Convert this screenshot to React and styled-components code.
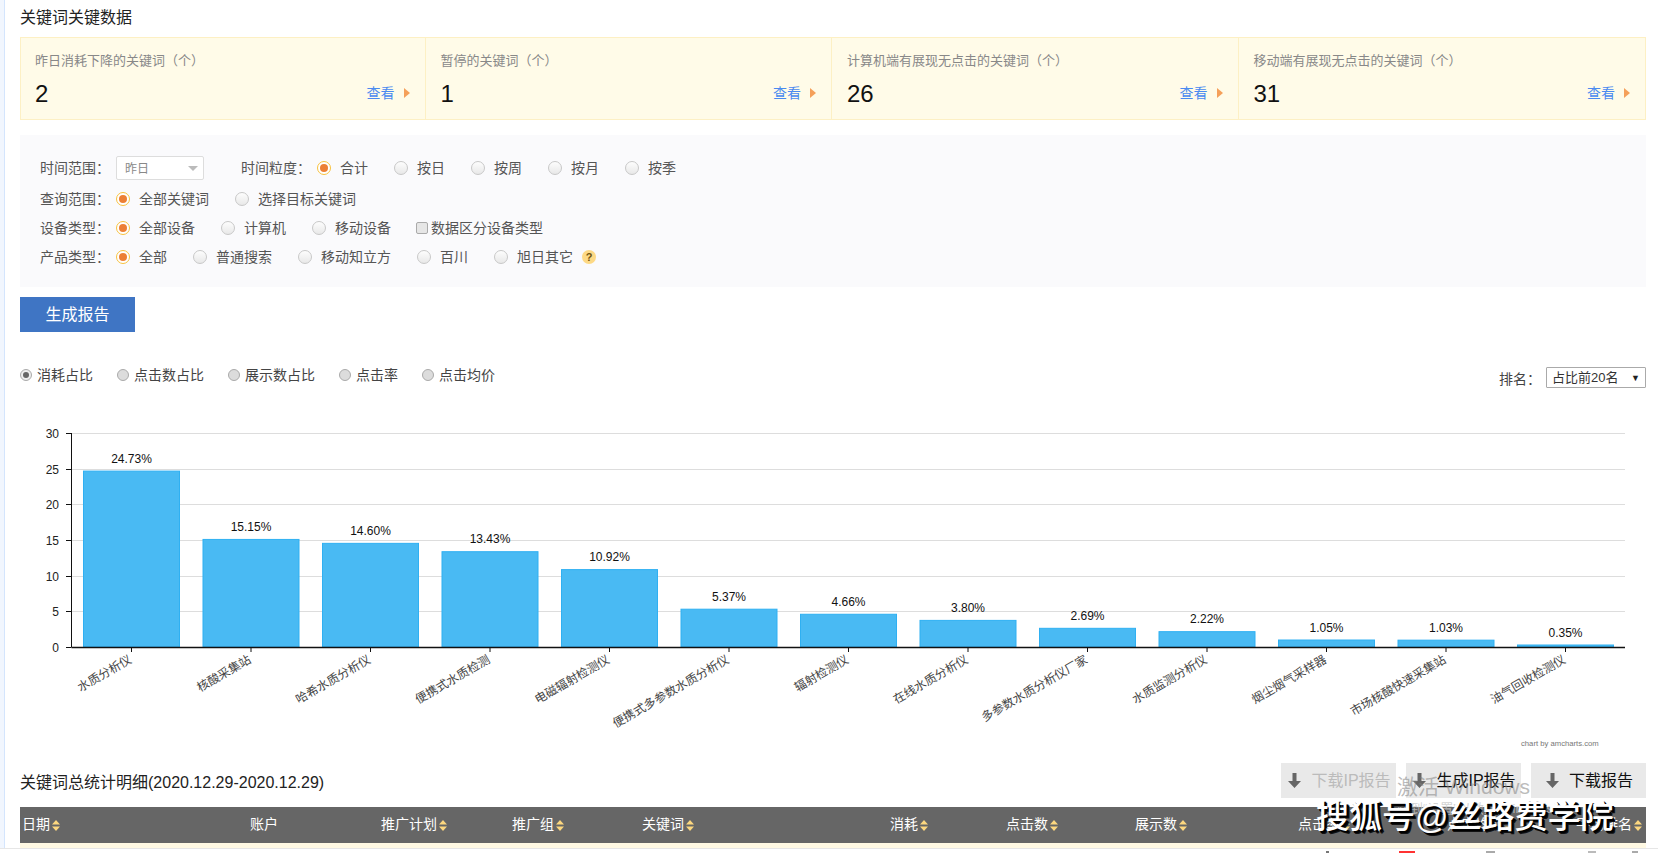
import React from "react";
import styled, { createGlobalStyle } from "styled-components";

const FONT = `"Liberation Sans", "Noto Sans CJK SC", sans-serif`;

const cards = [
  { label: "昨日消耗下降的关键词（个）", value: 2, width: 404 },
  { label: "暂停的关键词（个）", value: 1, width: 407 },
  { label: "计算机端有展现无点击的关键词（个）", value: 26, width: 407 },
  { label: "移动端有展现无点击的关键词（个）", value: 31, width: 408 }
];

const bars = [
  ["水质分析仪", 24.73],
  ["核酸采集站", 15.15],
  ["哈希水质分析仪", 14.6],
  ["便携式水质检测", 13.43],
  ["电磁辐射检测仪", 10.92],
  ["便携式多参数水质分析仪", 5.37],
  ["辐射检测仪", 4.66],
  ["在线水质分析仪", 3.8],
  ["多参数水质分析仪厂家", 2.69],
  ["水质监测分析仪", 2.22],
  ["烟尘烟气采样器", 1.05],
  ["市场核酸快速采集站", 1.03],
  ["油气回收检测仪", 0.35]
];

const columns = [
  { name: "日期", width: 230, sort: true, pad: 2 },
  { name: "账户", width: 131 },
  { name: "推广计划", width: 131, sort: true },
  { name: "推广组", width: 130, sort: true },
  { name: "关键词", width: 248, sort: true },
  { name: "消耗", width: 116, sort: true },
  { name: "点击数", width: 129, sort: true },
  { name: "展示数", width: 163, sort: true },
  { name: "点击率", width: 149, sort: true },
  { name: "点击均价", width: 129, sort: true },
  { name: "平均排名", width: 70, sort: true }
];

const GlobalStyle = createGlobalStyle`
  html, body {
    margin: 0;
    padding: 0;
    background: #fff;
    font-family: ${FONT};
  }
`;

const Page = styled.div`
  display: flex;
  width: 1658px;
  height: 853px;
  overflow: hidden;
  position: relative;
`;

const SideStrip = styled.div`
  width: 4px;
  height: 848px;
  flex: none;
  background: #f1f6fe;
  border-right: 1px solid #d4e5fd;
`;

const Content = styled.div`
  width: 1626px;
  margin-left: 15px;
  flex: none;
`;

const Heading = styled.div`
  height: 37px;
  line-height: 36px;
  font-size: 16px;
  color: #222;
`;

const CardRow = styled.div`
  display: flex;
  height: 83px;
  box-sizing: border-box;
  background: #fffbe8;
  border: 1px solid #fdf0c4;
`;

const Card = styled.div`
  box-sizing: border-box;
  width: ${p => p.$width}px;
  padding: 14px 15px 0;
  border-left: 1px solid #fdf0c4;
  &:first-child {
    border-left: 0;
    padding-left: 14px;
  }
`;

const CardLabel = styled.div`
  font-size: 13px;
  line-height: 17px;
  color: #888;
  white-space: nowrap;
`;

const CardBottom = styled.div`
  display: flex;
  align-items: center;
  justify-content: space-between;
  margin-top: 10px;
  height: 28px;
`;

const CardValue = styled.span`
  padding-top: 2px;
  font-size: 24px;
  color: #111;
`;

const ViewLink = styled.a`
  display: flex;
  align-items: center;
  gap: 9px;
  font-size: 14px;
  color: #4a8af0;
`;

// 中文字形在行框里偏下，这里统一往上提一点
const Raised = styled.span`
  padding-bottom: ${p => p.$by || 4}px;
`;

const Arrow = styled.i`
  width: 0;
  height: 0;
  border-left: 6px solid #f5a05a;
  border-top: 5px solid transparent;
  border-bottom: 5px solid transparent;
`;

const FilterPanel = styled.div`
  box-sizing: border-box;
  height: 152px;
  margin-top: 15px;
  padding: 21px 20px 0;
  background: #fafafc;
`;

const FilterRow = styled.div`
  display: flex;
  align-items: center;
  height: ${p => (p.$first ? 24 : 29)}px;
  margin-bottom: ${p => (p.$first ? 4 : 0)}px;
  font-size: 14px;
  color: #555;
  white-space: nowrap;
`;

const FieldLabel = styled.span`
  width: 76px;
  flex: none;
  padding-bottom: 2px;
`;

const FakeSelect = styled.div`
  box-sizing: border-box;
  display: flex;
  align-items: center;
  justify-content: space-between;
  width: 88px;
  height: 24px;
  margin-right: 37px;
  padding: 0 5px 0 8px;
  background: #fff;
  border: 1px solid #ddd;
  border-radius: 2px;
  font-size: 12px;
  color: #888;
`;

const SelectCaret = styled.i`
  width: 0;
  height: 0;
  border-top: 5px solid #bbb;
  border-left: 5px solid transparent;
  border-right: 5px solid transparent;
`;

const RadioOption = styled.label`
  display: flex;
  align-items: center;
  gap: 9px;
  margin-right: 26px;
`;

const Radio = styled.i`
  box-sizing: border-box;
  display: flex;
  align-items: center;
  justify-content: center;
  width: 14px;
  height: 14px;
  border-radius: 50%;
  background: ${p => (p.$on ? "#fff" : "linear-gradient(#fdfdfd, #e8e8e8)")};
  border: 1px solid ${p => (p.$on ? "#f8c23e" : "#c8c8c8")};
  &::after {
    content: "";
    display: ${p => (p.$on ? "block" : "none")};
    width: 8px;
    height: 8px;
    border-radius: 50%;
    background: #ec7f35;
  }
`;

const CheckOption = styled.label`
  display: flex;
  align-items: center;
  gap: 3px;
  margin-left: -1px;
`;

const Checkbox = styled.i`
  box-sizing: border-box;
  width: 12px;
  height: 12px;
  border-radius: 2px;
  background: #e6e6e6;
  border: 1px solid #aaa;
`;

const HelpBadge = styled.span`
  display: flex;
  align-items: center;
  justify-content: center;
  width: 14px;
  height: 14px;
  margin-left: -17px;
  border-radius: 50%;
  background: #fdd985;
  color: #6f5410;
  font-size: 11px;
  font-weight: 700;
`;

const PrimaryButton = styled.button`
  display: block;
  width: 115px;
  height: 35px;
  margin-top: 10px;
  padding: 0 0 3px;
  border: 0;
  background: #3f75c4;
  color: #fff;
  font-family: inherit;
  font-size: 16px;
`;

const ChartBar = styled.div`
  display: flex;
  align-items: center;
  justify-content: space-between;
  height: 21px;
  margin-top: 35px;
  font-size: 14px;
  color: #444;
  white-space: nowrap;
`;

const MetricGroup = styled.div`
  display: flex;
  gap: 24px;
  padding-bottom: 5px;
`;

const Metric = styled.label`
  display: flex;
  align-items: center;
  gap: 5px;
`;

const MetricRadio = styled.i`
  box-sizing: border-box;
  display: flex;
  align-items: center;
  justify-content: center;
  width: 12px;
  height: 12px;
  border-radius: 50%;
  background: ${p => (p.$on ? "#eee" : "#dcdcdc")};
  border: 1px solid #aaa;
  &::after {
    content: "";
    display: ${p => (p.$on ? "block" : "none")};
    width: 6px;
    height: 6px;
    border-radius: 50%;
    background: #666;
  }
`;

const RankPicker = styled.div`
  display: flex;
  align-items: center;
  gap: 5px;
`;

const RankSelect = styled.div`
  box-sizing: border-box;
  display: flex;
  align-items: center;
  justify-content: space-between;
  width: 100px;
  height: 21px;
  padding: 0 5px;
  border: 1px solid #aaa;
  border-radius: 1px;
  font-size: 13px;
  color: #333;
`;

const RankCaret = styled.span`
  font-size: 9px;
  color: #222;
`;

const ChartSvg = styled.svg`
  display: block;
  width: 1626px;
  height: 375px;
  font-family: ${FONT};
`;

const DetailBar = styled.div`
  display: flex;
  align-items: center;
  justify-content: space-between;
  height: 35px;
`;

const DetailTitle = styled.div`
  padding-top: 1px;
  font-size: 16px;
  color: #222;
`;

const DetailActions = styled.div`
  display: flex;
  gap: 10px;
`;

const GreyButton = styled.div`
  box-sizing: border-box;
  display: flex;
  align-items: center;
  justify-content: center;
  gap: 10px;
  width: 115px;
  height: 35px;
  padding-left: 2px;
  background: #e9e9e9;
  font-size: 16px;
  color: ${p => (p.$disabled ? "#bbb" : "#111")};
  white-space: nowrap;
`;

const TableHead = styled.div`
  display: flex;
  height: 36px;
  margin-top: 9px;
  background: #666;
  color: #fff;
  font-size: 14px;
`;

const HeadCell = styled.div`
  box-sizing: border-box;
  display: flex;
  align-items: center;
  gap: 2px;
  flex: none;
  width: ${p => p.$width}px;
  padding-left: ${p => p.$pad || 0}px;
  white-space: nowrap;
`;

const SortIcon = styled.svg`
  width: 8px;
  height: 11px;
  flex: none;
`;

const CreamRow = styled.div`
  height: 5px;
  background: #fff9e3;
`;

const BottomLine = styled.div`
  position: absolute;
  left: 0;
  right: 0;
  top: 848px;
  height: 5px;
  border-top: 1px solid #e6e6e6;
`;

const ClippedIcon = styled.i`
  position: absolute;
  left: ${p => p.$x}px;
  top: 2px;
  width: ${p => p.$w}px;
  height: 2px;
  background: ${p => p.$color};
`;

const ActivateMark = styled.div`
  position: absolute;
  left: 1397px;
  top: 773px;
  font-size: 21px;
  line-height: 28px;
  color: rgba(130, 130, 130, 0.55);
  white-space: nowrap;
  pointer-events: none;
`;

const ActivateHint = styled.div`
  font-size: 13px;
  line-height: 16px;
  color: rgba(200, 200, 200, 0.8);
`;

const Watermark = styled.div`
  position: absolute;
  left: 1316px;
  top: 796px;
  font-size: 33px;
  line-height: 42px;
  font-weight: 500;
  color: #fff;
  text-shadow: 2px 2px 0 #000, 3px 3px 0 #111;
  white-space: nowrap;
`;

const FilterOptions = ({ items, selected = 0 }) =>
  items.map((item, i) => (
    <RadioOption key={item}>
      <Radio $on={i === selected} />
      <Raised $by={2}>{item}</Raised>
    </RadioOption>
  ));

const Sort = () => (
  <SortIcon viewBox="0 0 8 11">
    <path d="M4 0l4 4.5H0zM4 11L0 6.5h8z" fill="#fcd77f" />
  </SortIcon>
);

const DownloadIcon = () => (
  <svg width="13" height="15" viewBox="0 0 13 15">
    <path d="M4.5 0h4v8H13l-6.5 7L0 8h4.5z" fill="#666" />
  </svg>
);

// 图表直接用页面坐标画，viewBox 偏移到图表所在位置
const X0 = 71.5;
const X1 = 1625;
const Y0 = 647;
const UNIT = 214 / 30;
const STEP = (X1 - X0) / bars.length;

function Chart() {
  return (
    <ChartSvg viewBox="20 388 1626 375">
      {[0, 5, 10, 15, 20, 25, 30].map(v => {
        const y = Math.round(Y0 - v * UNIT);
        return (
          <g key={v}>
            {v > 0 && <line x1={X0} x2={X1} y1={y + 0.5} y2={y + 0.5} stroke="#ddd" />}
            <line x1="66" x2={X0} y1={y + 0.5} y2={y + 0.5} stroke="#111" />
            <text x="59" y={y + 4.5} textAnchor="end" fontSize="12" fill="#222">
              {v}
            </text>
          </g>
        );
      })}
      {bars.map(([name, value], i) => {
        const left = X0 + STEP * i + 12;
        const center = left + 48;
        const top = Y0 - value * UNIT;
        return (
          <g key={name}>
            <rect
              x={left}
              y={top + 0.5}
              width="96"
              height={Y0 - top - 0.5}
              fill="#49baf3"
              stroke="#2fb0f2"
            />
            <text x={center} y={top - 8} textAnchor="middle" fontSize="12" fill="#111">
              {value.toFixed(2)}%
            </text>
            <line x1={center} x2={center} y1={Y0} y2={Y0 + 5} stroke="#111" />
            <text
              transform={`translate(${center + 1} 662) rotate(-30)`}
              textAnchor="end"
              fontSize="12"
              fill="#444"
            >
              {name}
            </text>
          </g>
        );
      })}
      <line x1={X0} x2={X0} y1="433" y2={Y0} stroke="#111" />
      <line x1={X0} x2={X1} y1={Y0 + 0.5} y2={Y0 + 0.5} stroke="#111" strokeWidth="1.5" />
      <text x="1521" y="746" fontSize="7.7" fill="#777">
        chart by amcharts.com
      </text>
    </ChartSvg>
  );
}

export default function App() {
  return (
    <Page>
      <GlobalStyle />
      <SideStrip />
      <Content>
        <Heading>关键词关键数据</Heading>
        <CardRow>
          {cards.map(card => (
            <Card key={card.label} $width={card.width}>
              <CardLabel>{card.label}</CardLabel>
              <CardBottom>
                <CardValue>{card.value}</CardValue>
                <ViewLink>
                  <Raised $by={3}>查看</Raised>
                  <Arrow />
                </ViewLink>
              </CardBottom>
            </Card>
          ))}
        </CardRow>

        <FilterPanel>
          <FilterRow $first>
            <FieldLabel>时间范围：</FieldLabel>
            <FakeSelect>
              <Raised $by={2}>昨日</Raised>
              <SelectCaret />
            </FakeSelect>
            <FieldLabel>时间粒度：</FieldLabel>
            <FilterOptions items={["合计", "按日", "按周", "按月", "按季"]} />
          </FilterRow>
          <FilterRow>
            <FieldLabel>查询范围：</FieldLabel>
            <FilterOptions items={["全部关键词", "选择目标关键词"]} />
          </FilterRow>
          <FilterRow>
            <FieldLabel>设备类型：</FieldLabel>
            <FilterOptions items={["全部设备", "计算机", "移动设备"]} />
            <CheckOption>
              <Checkbox />
              <Raised $by={2}>数据区分设备类型</Raised>
            </CheckOption>
          </FilterRow>
          <FilterRow>
            <FieldLabel>产品类型：</FieldLabel>
            <FilterOptions items={["全部", "普通搜索", "移动知立方", "百川", "旭日其它"]} />
            <HelpBadge>?</HelpBadge>
          </FilterRow>
        </FilterPanel>

        <PrimaryButton>生成报告</PrimaryButton>

        <ChartBar>
          <MetricGroup>
            {["消耗占比", "点击数占比", "展示数占比", "点击率", "点击均价"].map((m, i) => (
              <Metric key={m}>
                <MetricRadio $on={i === 0} />
                <Raised $by={2}>{m}</Raised>
              </Metric>
            ))}
          </MetricGroup>
          <RankPicker>
            排名：
            <RankSelect>
              <Raised $by={2}>占比前20名</Raised>
              <RankCaret>▼</RankCaret>
            </RankSelect>
          </RankPicker>
        </ChartBar>

        <Chart />

        <DetailBar>
          <DetailTitle>关键词总统计明细(2020.12.29-2020.12.29)</DetailTitle>
          <DetailActions>
            <GreyButton $disabled>
              <DownloadIcon />
              <Raised>下载IP报告</Raised>
            </GreyButton>
            <GreyButton>
              <DownloadIcon />
              <Raised>生成IP报告</Raised>
            </GreyButton>
            <GreyButton>
              <DownloadIcon />
              <Raised>下载报告</Raised>
            </GreyButton>
          </DetailActions>
        </DetailBar>

        <TableHead>
          {columns.map(col => (
            <HeadCell key={col.name} $width={col.width} $pad={col.pad}>
              <Raised>{col.name}</Raised>
              {col.sort && <Sort />}
            </HeadCell>
          ))}
        </TableHead>
        <CreamRow />
      </Content>

      <BottomLine>
        <ClippedIcon $x={1326} $w={3} $color="#777" />
        <ClippedIcon $x={1399} $w={16} $color="#f33" />
        <ClippedIcon $x={1486} $w={9} $color="#aaa" />
        <ClippedIcon $x={1588} $w={8} $color="#bbb" />
        <ClippedIcon $x={1632} $w={6} $color="#aaa" />
      </BottomLine>

      <ActivateMark>
        激活 Windows
        <ActivateHint>转到“设置”以激活 Windows。</ActivateHint>
      </ActivateMark>
      <Watermark>搜狐号@丝路费学院</Watermark>
    </Page>
  );
}
